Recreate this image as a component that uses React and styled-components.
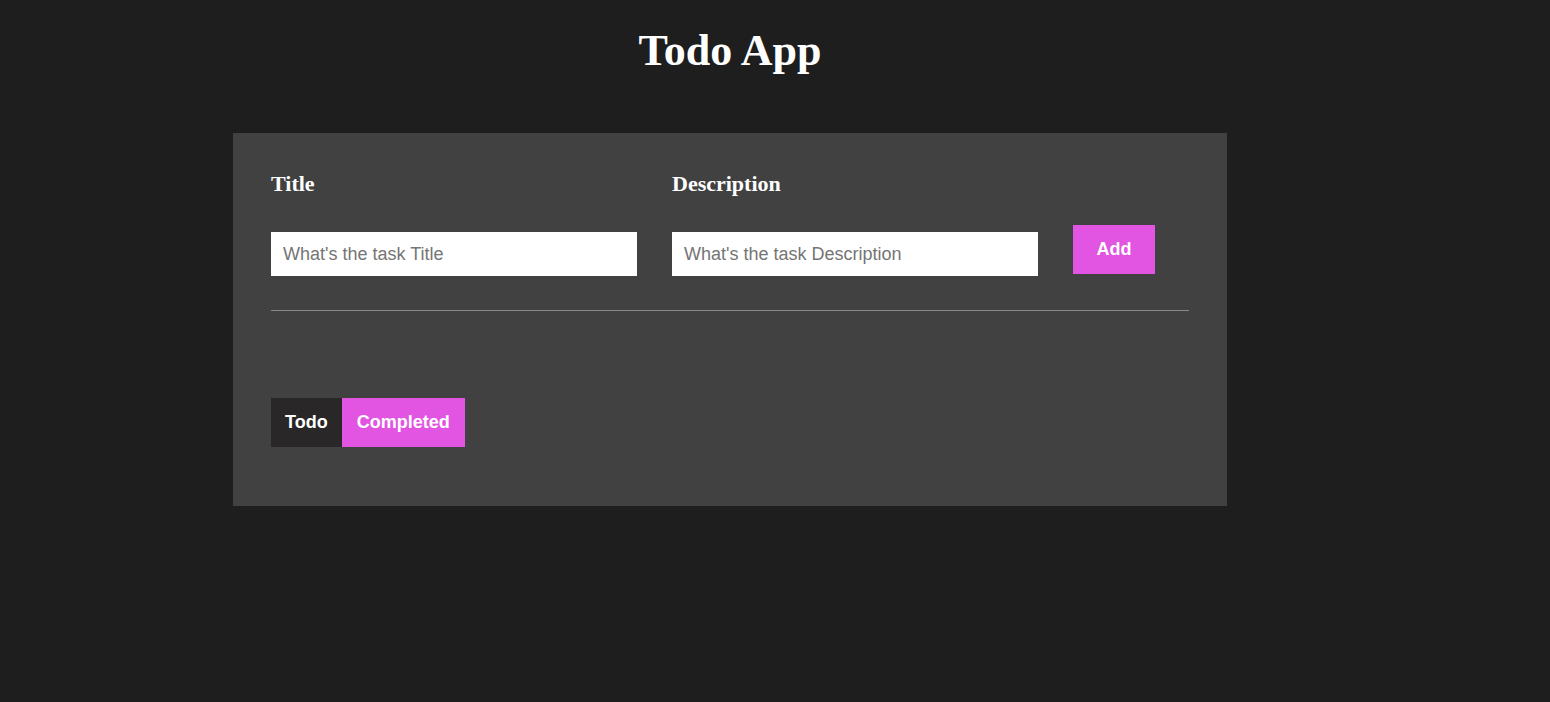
import React, { useState } from 'react'
import styled, { createGlobalStyle } from 'styled-components'

const GlobalStyle = createGlobalStyle`
  body {
    margin: 0;
    background: #1e1e1e;
    color: #fff;
    font-family: "Liberation Serif", "Times New Roman", serif;
  }
`

const Page = styled.div`
  width: 994px;
  margin-left: 233px;
  padding-top: 27px;
`

const Heading = styled.h1`
  margin: 0 0 58px 0;
  text-align: center;
  font-size: 44px;
  line-height: 48px;
  font-weight: bold;
`

const Wrapper = styled.div`
  background: #414141;
  padding: 38px 38px 59px 38px;
`

const InputRow = styled.div`
  display: flex;
  align-items: flex-end;
  gap: 35px;
  padding-bottom: 34px;
  border-bottom: 1px solid #8a8a8a;
`

const InputItem = styled.div`
  display: flex;
  flex-direction: column;
  align-items: flex-start;
`

const Label = styled.label`
  font-family: "Liberation Serif", "Times New Roman", serif;
  font-size: 22px;
  font-weight: bold;
  line-height: 25px;
  margin-bottom: 36px;
`

const TextInput = styled.input`
  width: 366px;
  height: 44px;
  box-sizing: border-box;
  padding: 0 12px;
  border: none;
  outline: none;
  font-family: "Liberation Sans", Arial, sans-serif;
  font-size: 18px;
  color: #333;
  background: #fff;

  &::placeholder {
    color: #757575;
  }
`

const AddButton = styled.button`
  height: 49px;
  width: 82px;
  margin-bottom: 2px;
  border: none;
  background: #e254e2;
  color: #fff;
  font-family: "Liberation Sans", Arial, sans-serif;
  font-size: 18px;
  font-weight: bold;
  cursor: pointer;
`

const TabRow = styled.div`
  display: flex;
  margin-top: 87px;
`

const TabButton = styled.button`
  height: 49px;
  padding: 0 ${p => (p.$wide ? 15 : 14)}px;
  border: none;
  background: ${p => (p.$active ? '#e254e2' : '#292727')};
  color: #fff;
  font-family: "Liberation Sans", Arial, sans-serif;
  font-size: 18px;
  font-weight: bold;
  cursor: pointer;
`

function App () {
  const [completedScreen, setCompletedScreen] = useState(true)
  const [title, setTitle] = useState('')
  const [description, setDescription] = useState('')

  return (
    <>
      <GlobalStyle />
      <Page>
        <Heading>Todo App</Heading>
        <Wrapper>
          <InputRow>
            <InputItem>
              <Label>Title</Label>
              <TextInput
                type="text"
                value={title}
                onChange={e => setTitle(e.target.value)}
                placeholder="What's the task Title"
              />
            </InputItem>
            <InputItem>
              <Label>Description</Label>
              <TextInput
                type="text"
                value={description}
                onChange={e => setDescription(e.target.value)}
                placeholder="What's the task Description"
              />
            </InputItem>
            <AddButton type="button">Add</AddButton>
          </InputRow>

          <TabRow>
            <TabButton
              $active={!completedScreen}
              onClick={() => setCompletedScreen(false)}
            >
              Todo
            </TabButton>
            <TabButton
              $wide
              $active={completedScreen}
              onClick={() => setCompletedScreen(true)}
            >
              Completed
            </TabButton>
          </TabRow>
        </Wrapper>
      </Page>
    </>
  )
}

export default App
